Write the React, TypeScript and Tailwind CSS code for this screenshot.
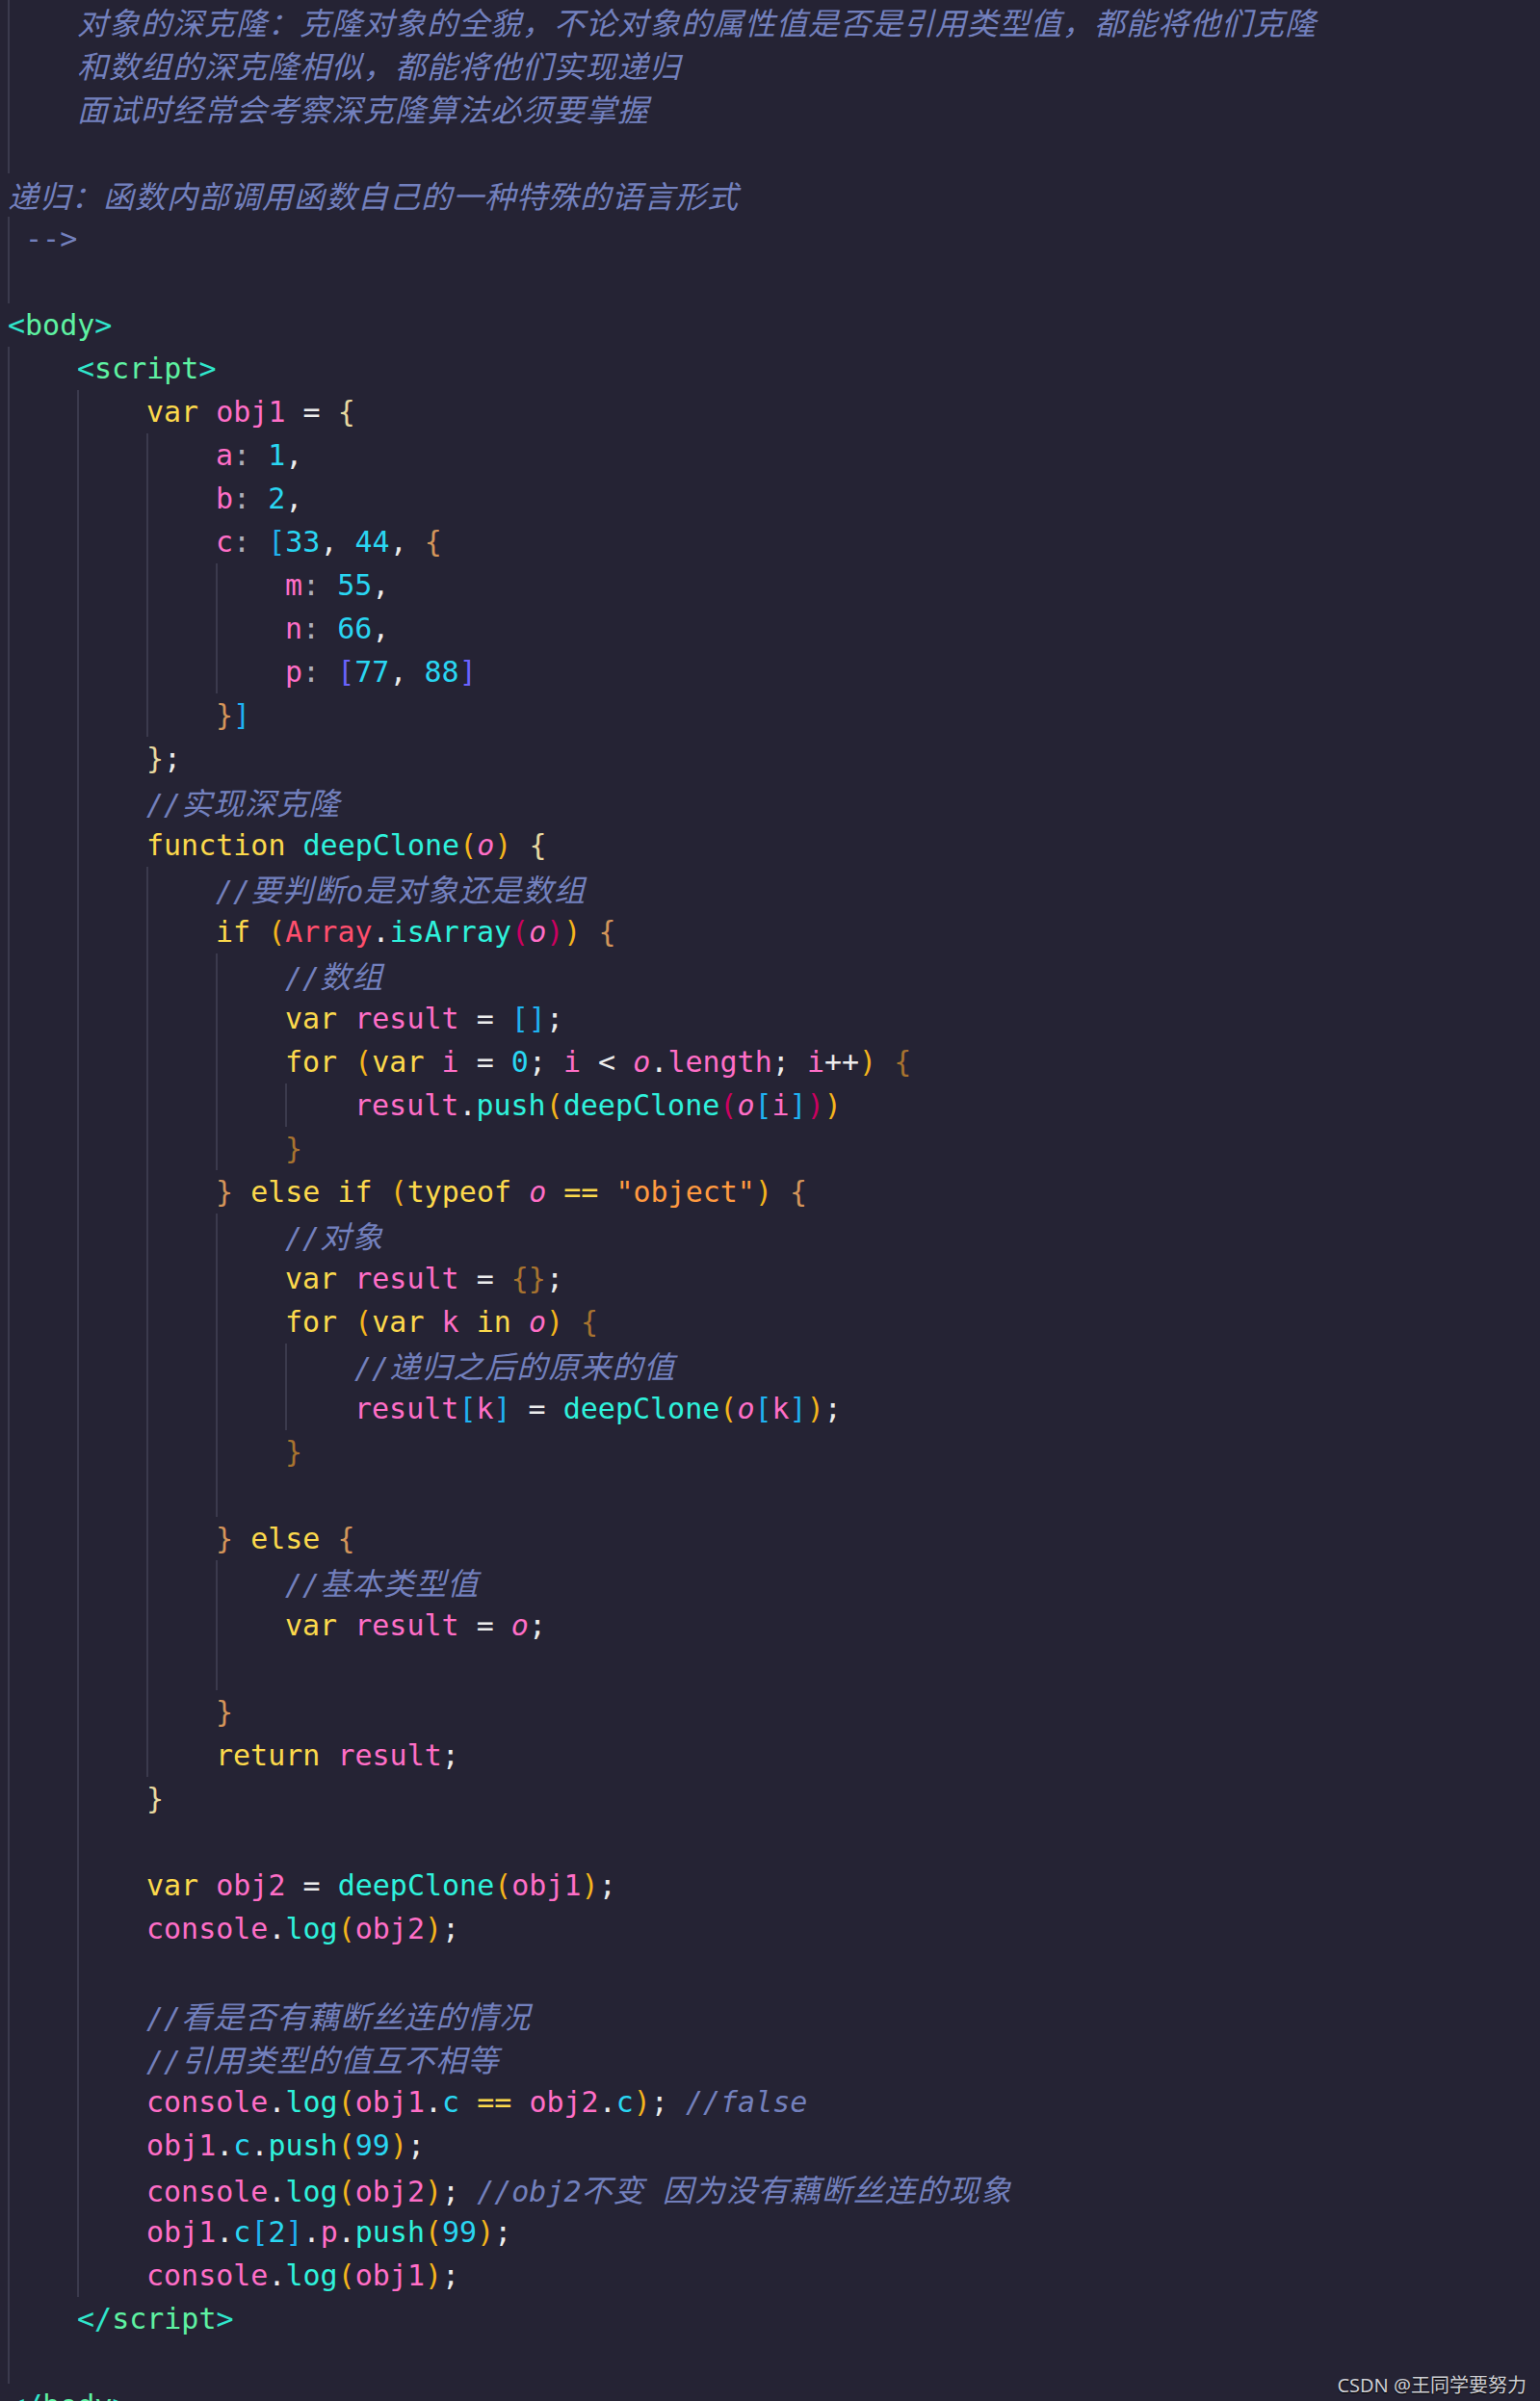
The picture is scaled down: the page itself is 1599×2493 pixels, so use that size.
const COLORS: Record<string, string> = {
  w: 'text-[#ececec]',
  k: 'text-[#fcd94c]',
  v: 'text-[#ff6ec7]',
  vi: 'text-[#ff6ec7] italic',
  n: 'text-[#2ad6f2]',
  f: 'text-[#2ff2dc]',
  g: 'text-[#aeaeb8]',
  c: 'text-[#7380bd] italic',
  cu: 'text-[#7380bd]',
  s: 'text-[#ff9a40]',
  r: 'text-[#ff4f6d]',
  tb: 'text-[#30e6cc]',
  tn: 'text-[#5ef2a2]',
  b1: 'text-[#e8d9a0]',
  b2: 'text-[#d4955a]',
  b3: 'text-[#a8732f]',
  p1: 'text-[#f5b51c]',
  p2: 'text-[#cc0060]',
  q1: 'text-[#1fb2f2]',
  q2: 'text-[#6b63ff]',
};

interface Line {
  g: number;
  t: string[];
  lead?: boolean;
}

const L = (g: number, ...t: string[]): Line => ({ g, t });

const lines: Line[] = [
  L(1, 'c:对象的深克隆：克隆对象的全貌，不论对象的属性值是否是引用类型值，都能将他们克隆'),
  L(1, 'c:和数组的深克隆相似，都能将他们实现递归'),
  L(1, 'c:面试时经常会考察深克隆算法必须要掌握'),
  L(1),
  L(0, 'c:递归：函数内部调用函数自己的一种特殊的语言形式'),
  { g: 0, lead: true, t: ['cu: -->'] },
  L(1),
  L(0, 'tb:<', 'tn:body', 'tb:>'),
  L(1, 'tb:<', 'tn:script', 'tb:>'),
  L(2, 'k:var', ' ', 'v:obj1', ' = ', 'b1:{'),
  L(3, 'v:a', 'g::', ' ', 'n:1', ','),
  L(3, 'v:b', 'g::', ' ', 'n:2', ','),
  L(3, 'v:c', 'g::', ' ', 'q1:[', 'n:33', ', ', 'n:44', ', ', 'b2:{'),
  L(4, 'v:m', 'g::', ' ', 'n:55', ','),
  L(4, 'v:n', 'g::', ' ', 'n:66', ','),
  L(4, 'v:p', 'g::', ' ', 'q2:[', 'n:77', ', ', 'n:88', 'q2:]'),
  L(3, 'b2:}', 'q1:]'),
  L(2, 'b1:}', ';'),
  L(2, 'c://实现深克隆'),
  L(2, 'k:function', ' ', 'f:deepClone', 'p1:(', 'vi:o', 'p1:)', ' ', 'b1:{'),
  L(3, 'c://要判断o是对象还是数组'),
  L(3, 'k:if', ' ', 'p1:(', 'r:Array', '.', 'f:isArray', 'p2:(', 'vi:o', 'p2:)', 'p1:)', ' ', 'b2:{'),
  L(4, 'c://数组'),
  L(4, 'k:var', ' ', 'v:result', ' = ', 'q1:[]', ';'),
  L(4, 'k:for', ' ', 'p1:(', 'k:var', ' ', 'v:i', ' = ', 'n:0', '; ', 'v:i', ' < ', 'vi:o', '.', 'v:length', '; ', 'v:i', '++', 'p1:)', ' ', 'b3:{'),
  L(5, 'v:result', '.', 'f:push', 'p1:(', 'f:deepClone', 'p2:(', 'vi:o', 'q1:[', 'v:i', 'q1:]', 'p2:)', 'p1:)'),
  L(4, 'b3:}'),
  L(3, 'b2:}', ' ', 'k:else if', ' ', 'p1:(', 'k:typeof', ' ', 'vi:o', ' ', 'k:==', ' ', 's:"object"', 'p1:)', ' ', 'b2:{'),
  L(4, 'c://对象'),
  L(4, 'k:var', ' ', 'v:result', ' = ', 'b3:{}', ';'),
  L(4, 'k:for', ' ', 'p1:(', 'k:var', ' ', 'v:k', ' ', 'k:in', ' ', 'vi:o', 'p1:)', ' ', 'b3:{'),
  L(5, 'c://递归之后的原来的值'),
  L(5, 'v:result', 'q1:[', 'v:k', 'q1:]', ' = ', 'f:deepClone', 'p1:(', 'vi:o', 'q1:[', 'v:k', 'q1:]', 'p1:)', ';'),
  L(4, 'b3:}'),
  L(4),
  L(3, 'b2:}', ' ', 'k:else', ' ', 'b2:{'),
  L(4, 'c://基本类型值'),
  L(4, 'k:var', ' ', 'v:result', ' = ', 'vi:o', ';'),
  L(4),
  L(3, 'b2:}'),
  L(3, 'k:return', ' ', 'v:result', ';'),
  L(2, 'b1:}'),
  L(2),
  L(2, 'k:var', ' ', 'v:obj2', ' = ', 'f:deepClone', 'p1:(', 'v:obj1', 'p1:)', ';'),
  L(2, 'v:console', '.', 'f:log', 'p1:(', 'v:obj2', 'p1:)', ';'),
  L(2),
  L(2, 'c://看是否有藕断丝连的情况'),
  L(2, 'c://引用类型的值互不相等'),
  L(2, 'v:console', '.', 'f:log', 'p1:(', 'v:obj1', '.', 'n:c', ' ', 'k:==', ' ', 'v:obj2', '.', 'n:c', 'p1:)', '; ', 'c://false'),
  L(2, 'v:obj1', '.', 'n:c', '.', 'f:push', 'p1:(', 'n:99', 'p1:)', ';'),
  L(2, 'v:console', '.', 'f:log', 'p1:(', 'v:obj2', 'p1:)', '; ', 'c://obj2不变 因为没有藕断丝连的现象'),
  L(2, 'v:obj1', '.', 'n:c', 'q1:[', 'n:2', 'q1:]', '.', 'v:p', '.', 'f:push', 'p1:(', 'n:99', 'p1:)', ';'),
  L(2, 'v:console', '.', 'f:log', 'p1:(', 'v:obj1', 'p1:)', ';'),
  L(1, 'tb:</', 'tn:script', 'tb:>'),
  L(1),
  L(0, 'tb:</', 'tn:body', 'tb:>'),
];

const CJK = /([\u3000-\u303f\u4e00-\u9fff\uff00-\uffef]+)/;

function parse(tok: string): [string, string] {
  const m = tok.match(/^(vi|cu|tb|tn|b1|b2|b3|p1|p2|q1|q2|k|v|n|f|g|c|s|r):/);
  return m ? [m[1], tok.slice(m[0].length)] : ['w', tok];
}

function Mixed({ text }: { text: string }) {
  return (
    <>
      {text.split(CJK).map((part, i) =>
        CJK.test(part) ? (
          <span key={i} className="font-['Noto_Sans_CJK_SC',sans-serif] text-[32px] tracking-[1px]">
            {part}
          </span>
        ) : (
          part
        )
      )}
    </>
  );
}

function CodeLine({ line }: { line: Line }) {
  return (
    <div className="flex h-[45px] whitespace-pre">
      {Array.from({ length: line.g }).map((_, i) => (
        <span key={i} className="w-[72px] shrink-0 shadow-[inset_2px_0_0_#3b3a4d]" />
      ))}
      <span className={line.lead ? 'shadow-[inset_2px_0_0_#3b3a4d]' : ''}>
        {line.t.map((tok, i) => {
          const [key, text] = parse(tok);
          return (
            <span key={i} className={COLORS[key]}>
              {key === 'c' || key === 'cu' ? <Mixed text={text} /> : text}
            </span>
          );
        })}
      </span>
    </div>
  );
}

export default function App() {
  return (
    <div className="relative h-[2493px] w-full overflow-hidden bg-[#252334] pl-2 font-['DejaVu_Sans_Mono','Liberation_Mono',monospace] text-[30px] leading-[45px]">
      {lines.map((line, i) => (
        <CodeLine key={i} line={line} />
      ))}
      <div className="absolute bottom-[6px] right-[14px] font-['Noto_Sans','Noto_Sans_CJK_SC',sans-serif] text-[20px] leading-none text-[#cfcfd4] [text-shadow:0_1px_1px_#000]">
        CSDN @王同学要努力
      </div>
    </div>
  );
}
